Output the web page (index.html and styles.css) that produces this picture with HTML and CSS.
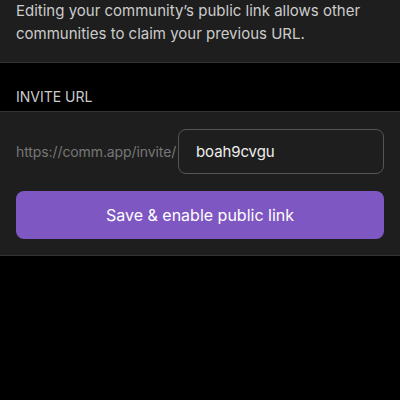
FILE: index.html
```html
<!DOCTYPE html>
<html lang="en">
<head>
<meta charset="utf-8">
<title>Invite URL</title>
<link rel="stylesheet" href="styles.css">
</head>
<body>
  <section class="panel note">
    <p class="note-text">Editing your community’s public link allows other communities to claim your previous URL.</p>
  </section>
  <h2 class="section-header">INVITE URL</h2>
  <section class="panel form">
    <div class="url-row">
      <span class="url-prefix">https://comm.app/invite/</span>
      <div class="url-input">boah9cvgu</div>
    </div>
    <button class="save-button" type="button">Save &amp; enable public link</button>
  </section>
</body>
</html>
```

FILE: styles.css
```css
* {
  box-sizing: border-box;
}

html, body {
  margin: 0;
  padding: 0;
  background: #000;
  font-family: Inter, "Noto Sans", sans-serif;
  -webkit-font-smoothing: antialiased;
}

body {
  width: 400px;
  height: 400px;
  overflow: hidden;
}

.panel {
  background: #1e1e1e;
  border-bottom: 1px solid #333;
}

.note {
  height: 63px;
  padding: 0 16px;
}

.note-text {
  margin: 0;
  font-size: 15px;
  line-height: 22.5px;
  color: #cccccc;
}

.section-header {
  margin: 0;
  height: 49px;
  padding: 24px 16px 0;
  font-size: 14px;
  line-height: 20px;
  font-weight: 400;
  color: #cccccc;
  border-bottom: 1px solid #333;
  background: #000;
}

.form {
  padding: 17px 16px 16px;
  display: flex;
  flex-direction: column;
  gap: 17px;
}

.url-row {
  display: flex;
  align-items: center;
  gap: 2px;
}

.url-prefix {
  width: 160px;
  font-size: 14px;
  letter-spacing: -0.1px;
  color: #777;
  white-space: nowrap;
}

.url-input {
  flex: 1;
  height: 45px;
  border: 1px solid #555;
  border-radius: 8px;
  padding: 0 17px;
  display: flex;
  align-items: center;
  font-size: 15px;
  letter-spacing: -0.1px;
  color: #eeeeee;
}

.save-button {
  height: 48px;
  border: none;
  border-radius: 8px;
  background: #7e57c2;
  color: #fff;
  font-family: inherit;
  font-size: 16px;
  font-weight: 400;
  padding: 0;
}
```
